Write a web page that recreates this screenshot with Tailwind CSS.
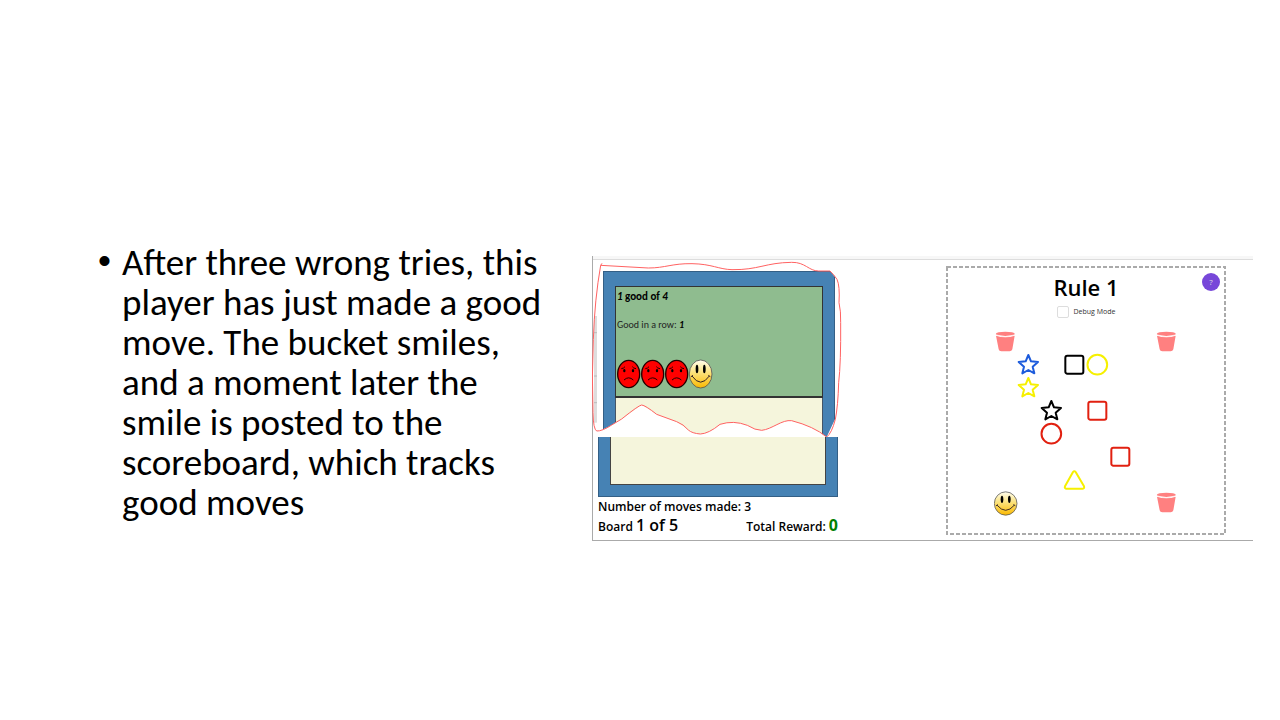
<!DOCTYPE html>
<html lang="en">
<head>
<meta charset="utf-8">
<title>Scoreboard</title>
<script src="https://cdn.jsdelivr.net/npm/@tailwindcss/browser@4"></script>
</head>
<body class="bg-white text-black font-['Open_Sans','Noto_Sans',sans-serif]">
<svg class="absolute size-0" aria-hidden="true">
  <defs>
    <linearGradient id="gold" x1="0" y1="0" x2="0" y2="1"><stop offset="0" stop-color="#fffef0"/><stop offset=".45" stop-color="#fbe27c"/><stop offset="1" stop-color="#fbb900"/></linearGradient>
    <symbol id="sad" viewBox="0 0 72 90" preserveAspectRatio="none">
      <ellipse cx="35" cy="45" rx="33" ry="41" fill="#f00" stroke="#200" stroke-width="4"/>
      <ellipse cx="22" cy="35" rx="3.500" ry="5"/><ellipse cx="48" cy="35" rx="3.500" ry="5"/>
      <path d="M13 29q8-1 11-6M46 23q3 5 11 6M21 63q14-13 28 0" fill="none" stroke="#200" stroke-width="3"/>
    </symbol>
    <symbol id="smile" viewBox="0 0 72 90" preserveAspectRatio="none">
      <ellipse cx="35" cy="45" rx="34" ry="42" fill="url(#gold)" stroke="#555" stroke-width="2.500"/>
      <ellipse cx="24" cy="30" rx="4" ry="13"/><ellipse cx="46" cy="30" rx="4" ry="13"/>
      <path d="M9 51q26 37 52 0M6 53l6-4M58 49l6 4" fill="none" stroke="#322" stroke-width="3"/>
    </symbol>
    <symbol id="bucket" viewBox="0 0 69 69"><path d="M6 17q28 9 56 0l-7 41q-2 6-8 6H22q-7 0-8-6z" fill="#ff8080"/><ellipse cx="34" cy="12" rx="28.500" ry="7" fill="#ff8080"/><path d="M5 15q29 9 58 0" fill="none" stroke="#fff" stroke-width="2.500"/></symbol>
    <symbol id="star" viewBox="0 0 69 69"><path d="M34 6l8 19 21 2-16 14 5 20-18-10-18 10 5-20L5 27l21-2z" fill="none" stroke="currentColor" stroke-width="6" stroke-linejoin="round"/></symbol>
    <symbol id="square" viewBox="0 0 69 69"><rect x="7" y="8" width="54" height="54" rx="6" fill="none" stroke="currentColor" stroke-width="6"/></symbol>
    <symbol id="circle" viewBox="0 0 69 69"><circle cx="34" cy="35" r="29.500" fill="none" stroke="currentColor" stroke-width="6"/></symbol>
    <symbol id="triangle" viewBox="0 0 69 69"><path d="M30 12q4-5 8 0l25 43q2 6-4 7H9q-5-1-3-7z" fill="none" stroke="currentColor" stroke-width="6" stroke-linejoin="round"/></symbol>
  </defs>
</svg>
<main class="flex items-start">
  <section class="w-[592px] shrink-0 pl-[98px] pt-[243px]">
    <ul>
      <li class="flex font-[Carlito,Calibri,'Open_Sans',sans-serif] text-[37px] leading-[40px] whitespace-nowrap">
        <span class="w-6 shrink-0 font-['Liberation_Sans',sans-serif] text-[37px] leading-9" aria-hidden="true">•</span>
        <p>After three wrong tries, this<br>player has just made a good<br>move. The bucket smiles,<br>and a moment later the<br>smile is posted to the<br>scoreboard, which tracks<br>good moves</p>
      </li>
    </ul>
  </section>
  <figure class="relative mt-64 mr-[27px] flex h-[285px] flex-1 items-start border-b border-l border-[#aaa]">
    <div class="absolute inset-x-0 top-0 h-1 border-b border-[#ddd] bg-[#f7f7f7]"></div>
    <section class="w-[246px] shrink-0 pl-[5px] pt-[15px]">
      <div class="ml-[5px] flex h-[166px] w-[232px] flex-col border-x border-t border-[#345f85] bg-[#4682b4] px-[11px] pt-[14px]">
        <div class="h-[112px] border-x border-t border-b-2 border-[#333] bg-[#8fbc8f] px-px pt-1 font-[Carlito,'Open_Sans',sans-serif] leading-3">
          <p class="text-[11px] font-bold"><i>1</i> good of <i>4</i></p>
          <p class="mt-[16px] text-[10px] text-[#222]">Good in a row: <b><i class="text-black">1</i></b></p>
          <div class="mt-[28px] flex">
            <svg class="h-[30px] w-6"><use href="#sad"/></svg><svg class="h-[30px] w-6"><use href="#sad"/></svg><svg class="h-[30px] w-6"><use href="#sad"/></svg><svg class="h-[30px] w-6"><use href="#smile"/></svg>
          </div>
        </div>
        <div class="flex-1 border-x border-[#456] bg-[#f5f5dc]"></div>
      </div>
      <div class="relative z-10 h-[60px] w-[240px] border-x border-b border-[#345f85] bg-[#4682b4] px-[11px] pb-[11px]">
        <div class="h-full border-x border-b border-[#444] bg-[#f5f5dc]"></div>
      </div>
      <p class="mt-px w-[240px] text-[12px] leading-[18px] font-semibold">Number of moves made: 3</p>
      <div class="flex w-[240px] items-baseline justify-between text-[12px] leading-[18px] font-semibold">
        <p>Board <span class="text-[16px]">1 of 5</span></p>
        <p>Total Reward: <span class="text-[16px] font-bold text-[#008000]">0</span></p>
      </div>
    </section>
    <svg class="absolute -left-px top-0 h-[285px] w-[252px]" viewBox="0 0 756 855">
      <path d="M729 543L704 543Q665 511 599 494C570 490 540 520 509 523Q490 523 466 508Q425 492 384 505Q350 533 325 534Q300 532 289 522L254 497L194 475L149 447L89 489L59 507Q30 526 5 523V545H729zM704 543L729 490V545zM690 40h20l25 30V30z" fill="#fff"/>
      <path d="M6 180h9v320h-9z" fill="#ddd"/><path d="M6 230h9M6 360h9M6 440h9" stroke="#aaa" stroke-width="2"/>
      <path d="M30 22L26 28L169 36C220 36 240 22 300 23C360 24 380 40 420 41C500 42 520 20 599 19C640 18 650 45 680 45L714 45Q725 55 735 70Q744 90 741 140Q747 165 746 200Q747 320 740 380Q738 450 730 490Q719 532 704 543Q665 511 599 494C570 490 540 520 509 523Q490 523 466 508Q425 492 384 505Q350 533 325 534Q300 532 289 522Q275 505 254 497L194 475Q160 448 149 447Q140 448 89 489L59 507Q30 526 14 525Q4 520 3 470Q-1 360 4 250Q8 130 26 28" fill="none" stroke="#ff6262" stroke-width="3"/>
    </svg>
    <section class="relative mt-[9px] ml-[107px] flex h-[270px] w-[280px] shrink-0 flex-col items-center">
      <svg class="absolute inset-0 h-full w-full" viewBox="0 0 280 270"><rect x="1" y="2" width="278" height="267" fill="none" stroke="#aaa" stroke-width="2" stroke-dasharray="4 2"/></svg>
      <button class="absolute right-[6px] top-[8px] size-[18px] rounded-full bg-[#7747d9] text-center text-[8px] text-[#ddd]">?</button>
      <h1 class="mt-[6px] text-[22px] leading-8 font-semibold">Rule 1</h1>
      <label class="mt-[3px] flex items-center gap-[5px] text-[7px] leading-3 text-[#333]"><input type="checkbox" class="size-[12px] appearance-none rounded-xs border border-[#ddd] bg-white">Debug Mode</label>
      <div class="mt-[12px] grid grid-cols-[repeat(8,23px)] grid-rows-[repeat(8,23px)]">
        <svg class="col-start-1 row-start-1 size-[23px]"><use href="#bucket"/></svg>
        <svg class="col-start-8 row-start-1 size-[23px]"><use href="#bucket"/></svg>
        <svg class="col-start-2 row-start-2 size-[23px] text-[#1c5bdc]"><use href="#star"/></svg>
        <svg class="col-start-4 row-start-2 size-[23px] text-black"><use href="#square"/></svg>
        <svg class="col-start-5 row-start-2 size-[23px] text-[#f6f000]"><use href="#circle"/></svg>
        <svg class="col-start-2 row-start-3 size-[23px] text-[#f6f000]"><use href="#star"/></svg>
        <svg class="col-start-3 row-start-4 size-[23px] text-black"><use href="#star"/></svg>
        <svg class="col-start-5 row-start-4 size-[23px] text-[#e12010]"><use href="#square"/></svg>
        <svg class="col-start-3 row-start-5 size-[23px] text-[#e12010]"><use href="#circle"/></svg>
        <svg class="col-start-6 row-start-6 size-[23px] text-[#e12010]"><use href="#square"/></svg>
        <svg class="col-start-4 row-start-7 size-[23px] text-[#f6f000]"><use href="#triangle"/></svg>
        <svg class="col-start-1 row-start-8 h-[25px] w-6"><use href="#smile"/></svg>
        <svg class="col-start-8 row-start-8 size-[23px]"><use href="#bucket"/></svg>
      </div>
    </section>
  </figure>
</main>
</body>
</html>
